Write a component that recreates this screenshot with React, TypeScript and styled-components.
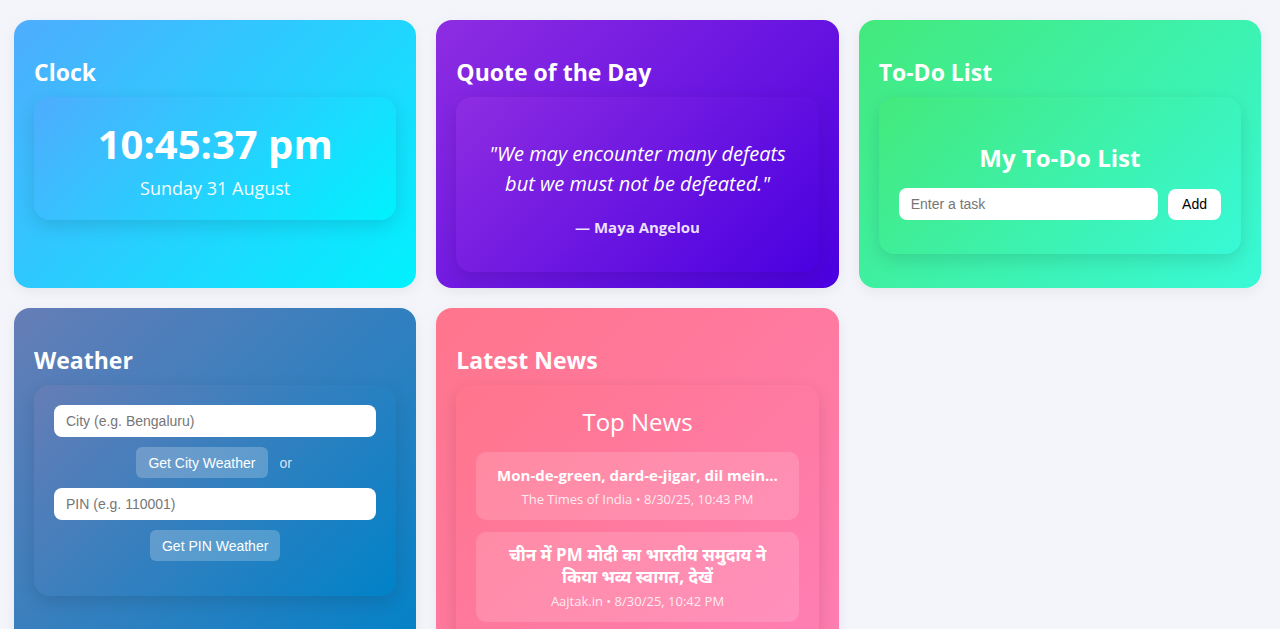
import React from "react";
import styled, { createGlobalStyle } from "styled-components";

const Global = createGlobalStyle`
  * { box-sizing: border-box; }
  html, body { margin: 0; padding: 0; background: #f4f5fa; }
  body { font-family: "Open Sans", "Noto Sans", "Noto Sans Devanagari", "DejaVu Sans", sans-serif; color: #fff; }
`;

const grads: Record<string, string> = {
  clock: "linear-gradient(135deg, #4facfe 0%, #00f2fe 100%)",
  quote: "linear-gradient(135deg, #8e2de2 0%, #4a00e0 100%)",
  todo: "linear-gradient(135deg, #43e97b 0%, #38f9d7 100%)",
  weather: "linear-gradient(135deg, #667db6 0%, #0082c8 100%)",
  news: "linear-gradient(135deg, #ff758c 0%, #ff7eb3 100%)",
};

const Grid = styled.main`
  display: grid;
  grid-template-columns: repeat(3, 1fr);
  gap: 20px;
  padding: 20px 19px 20px 14px;
  align-items: start;
`;

const Card = styled.section<{ $v: string }>`
  background: ${(p) => grads[p.$v]};
  border-radius: 16px;
  padding: 20px 20px 16px;
  min-height: ${(p) => (p.$v === "weather" || p.$v === "news" ? "360px" : "268px")};
  box-shadow: 0 4px 14px rgba(0, 0, 0, 0.06);
`;

const Title = styled.h2`
  margin: 17px 0 10px;
  font-size: 23px;
  line-height: 30px;
  font-weight: 700;
`;

const Inner = styled.div<{ $v: string }>`
  background: ${(p) => grads[p.$v]};
  border-radius: 16px;
  padding: 20px;
  box-shadow: 0 6px 18px rgba(0, 0, 0, 0.12);
  text-align: center;
`;

const Time = styled.div`
  font-size: 40px;
  font-weight: 700;
  line-height: 54px;
`;

const DateLine = styled.div`
  margin-top: 5px;
  font-size: 18px;
  line-height: 24px;
  opacity: 0.95;
`;

const Quote = styled.p`
  margin: 22px 0 18px;
  font-size: 20px;
  line-height: 30px;
  font-style: italic;
`;

const Author = styled.p`
  margin: 0 0 15px;
  font-size: 15px;
  font-weight: 700;
  line-height: 20px;
  color: rgba(255, 255, 255, 0.88);
`;

const SubTitle = styled.h3<{ $weight?: number }>`
  margin: ${(p) => (p.$weight === 500 ? "0 0 14px" : "24px 0 14px")};
  font-size: 24px;
  line-height: 33px;
  font-weight: ${(p) => p.$weight ?? 700};
`;

const Row = styled.div`
  display: flex;
  gap: 10px;
  align-items: center;
  justify-content: center;
`;

const Input = styled.input<{ $grow?: boolean }>`
  flex: ${(p) => (p.$grow ? "1 1 auto" : "0 0 32px")};
  width: 100%;
  min-width: 0;
  height: 32px;
  border: none;
  border-radius: 8px;
  padding: 0 12px;
  font-family: "Liberation Sans", Arial, sans-serif;
  font-size: 14px;
  color: #333;
  background: #fff;
  outline: none;
  &::placeholder { color: #767676; }
`;

const WhiteButton = styled.button`
  height: 31px;
  padding: 0 14px;
  border: none;
  border-radius: 8px;
  background: #fff;
  color: #000;
  font-family: "Liberation Sans", Arial, sans-serif;
  font-size: 14px;
`;

const TodoBody = styled.div`
  padding-bottom: 14px;
`;

const WeatherBody = styled.div`
  display: flex;
  flex-direction: column;
  gap: 10px;
  padding-bottom: 15px;
`;

const GlassButton = styled.button`
  height: 31px;
  padding: 0 12px;
  border: none;
  border-radius: 6px;
  background: rgba(255, 255, 255, 0.22);
  color: #fff;
  font-family: "Liberation Sans", Arial, sans-serif;
  font-size: 14px;
`;

const Or = styled.span`
  font-family: "Liberation Sans", Arial, sans-serif;
  font-size: 14px;
  color: rgba(255, 255, 255, 0.8);
  padding: 0 2px;
`;

const NewsList = styled.div`
  display: flex;
  flex-direction: column;
  gap: 12px;
`;

const NewsItem = styled.article`
  background: rgba(255, 255, 255, 0.15);
  border-radius: 10px;
  padding: 12px 16px;
  display: flex;
  flex-direction: column;
  gap: 4px;
`;

const NewsTitle = styled.div<{ $hindi?: boolean }>`
  font-size: ${(p) => (p.$hindi ? "17px" : "15px")};
  font-weight: 700;
  line-height: 22px;
`;

const Meta = styled.div`
  font-size: 13px;
  line-height: 18px;
  color: rgba(255, 255, 255, 0.85);
`;

export default function App() {
  return (
    <>
      <Global />
      <Grid>
        <Card $v="clock">
          <Title>Clock</Title>
          <Inner $v="clock">
            <Time>10:45:37 pm</Time>
            <DateLine>Sunday 31 August</DateLine>
          </Inner>
        </Card>
        <Card $v="quote">
          <Title>Quote of the Day</Title>
          <Inner $v="quote">
            <Quote>"We may encounter many defeats but we must not be defeated."</Quote>
            <Author>— Maya Angelou</Author>
          </Inner>
        </Card>
        <Card $v="todo">
          <Title>To-Do List</Title>
          <Inner $v="todo">
            <TodoBody>
              <SubTitle>My To-Do List</SubTitle>
              <Row>
                <Input $grow placeholder="Enter a task" />
                <WhiteButton>Add</WhiteButton>
              </Row>
            </TodoBody>
          </Inner>
        </Card>
        <Card $v="weather">
          <Title>Weather</Title>
          <Inner $v="weather">
            <WeatherBody>
              <Input placeholder="City (e.g. Bengaluru)" />
              <Row>
                <GlassButton>Get City Weather</GlassButton>
                <Or>or</Or>
              </Row>
              <Input placeholder="PIN (e.g. 110001)" />
              <Row>
                <GlassButton>Get PIN Weather</GlassButton>
              </Row>
            </WeatherBody>
          </Inner>
        </Card>
        <Card $v="news">
          <Title>Latest News</Title>
          <Inner $v="news">
            <SubTitle $weight={500}>Top News</SubTitle>
            <NewsList>
              <NewsItem>
                <NewsTitle>Mon-de-green, dard-e-jigar, dil mein...</NewsTitle>
                <Meta>The Times of India • 8/30/25, 10:43 PM</Meta>
              </NewsItem>
              <NewsItem>
                <NewsTitle $hindi>चीन में PM मोदी का भारतीय समुदाय ने किया भव्य स्वागत, देखें</NewsTitle>
                <Meta>Aajtak.in • 8/30/25, 10:42 PM</Meta>
              </NewsItem>
            </NewsList>
          </Inner>
        </Card>
      </Grid>
    </>
  );
}
